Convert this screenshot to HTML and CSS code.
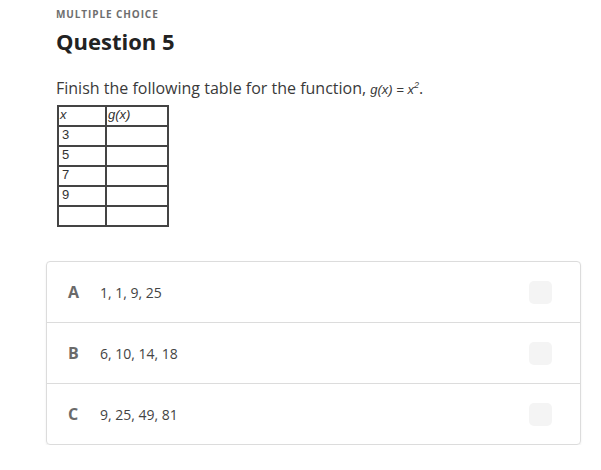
FILE: index.html
```html
<!DOCTYPE html>
<html>
<head>
<meta charset="utf-8">
<link rel="stylesheet" href="styles.css">
</head>
<body>
<div class="page">
  <div class="kicker">MULTIPLE CHOICE</div>
  <h1 class="title">Question 5</h1>
  <p class="prompt">Finish the following table for the function, <span class="math">g(x) = x<sup>2</sup></span>.</p>
  <table class="values">
    <tr><td class="c1 it">x</td><td class="c2 it">g(x)</td></tr>
    <tr><td class="c1">3</td><td class="c2"></td></tr>
    <tr><td class="c1">5</td><td class="c2"></td></tr>
    <tr><td class="c1">7</td><td class="c2"></td></tr>
    <tr><td class="c1">9</td><td class="c2"></td></tr>
    <tr><td class="c1"></td><td class="c2"></td></tr>
  </table>
  <div class="choices">
    <div class="choice"><span class="letter">A</span><span class="answer">1, 1, 9, 25</span><span class="box"></span></div>
    <div class="choice"><span class="letter">B</span><span class="answer">6, 10, 14, 18</span><span class="box"></span></div>
    <div class="choice"><span class="letter">C</span><span class="answer">9, 25, 49, 81</span><span class="box"></span></div>
  </div>
</div>
</body>
</html>
```
FILE: styles.css
```css
html, body { margin: 0; padding: 0; background: #fff; }
body { font-family: "Open Sans", "Liberation Sans", sans-serif; color: #333; }
.page { padding: 7px 20px 0 46px; }
.kicker { margin-left: 10px; font-size: 10px; font-weight: 700; letter-spacing: 0.9px; color: #6e6e6e; line-height: 14px; }
.title { margin: 5px 0 0 10px; font-size: 22px; font-weight: 700; color: #222; line-height: 30px; }
.prompt { margin: 21px 0 0 10px; font-size: 16px; line-height: 22px; height: 22px; color: #3a3a3a; }
.math { font-family: "Liberation Sans", sans-serif; font-style: italic; font-size: 13px; line-height: 0; }
.math sup { font-size: 9px; vertical-align: 6px; line-height: 0; }
.values { margin: 6px 0 0 11px; border-collapse: collapse; font-family: "Liberation Sans", Arial, sans-serif; font-size: 13px; color: #333; }
.values td { border: 2px solid #444; height: 18px; padding: 0 0 0 3px; line-height: 16px; vertical-align: top; }
.values td.c1 { width: 43px; }
.values td.c2 { width: 57px; }
.values td.it { font-style: italic; padding-left: 1px; }
.choices { margin-top: 34px; border: 1px solid #dcdcdc; border-radius: 4px; box-shadow: 0 1px 2px rgba(0,0,0,0.08); }
.choice { display: flex; align-items: center; height: 60px; border-top: 1px solid #dcdcdc; padding: 0 28px 0 21px; }
.choice:first-child { border-top: none; }
.letter { width: 32px; font-size: 16px; font-weight: 700; color: #6a6a6a; }
.answer { flex: 1; font-size: 14px; color: #444; }
.box { width: 23px; height: 23px; border-radius: 5px; background: #f4f4f4; }
```
